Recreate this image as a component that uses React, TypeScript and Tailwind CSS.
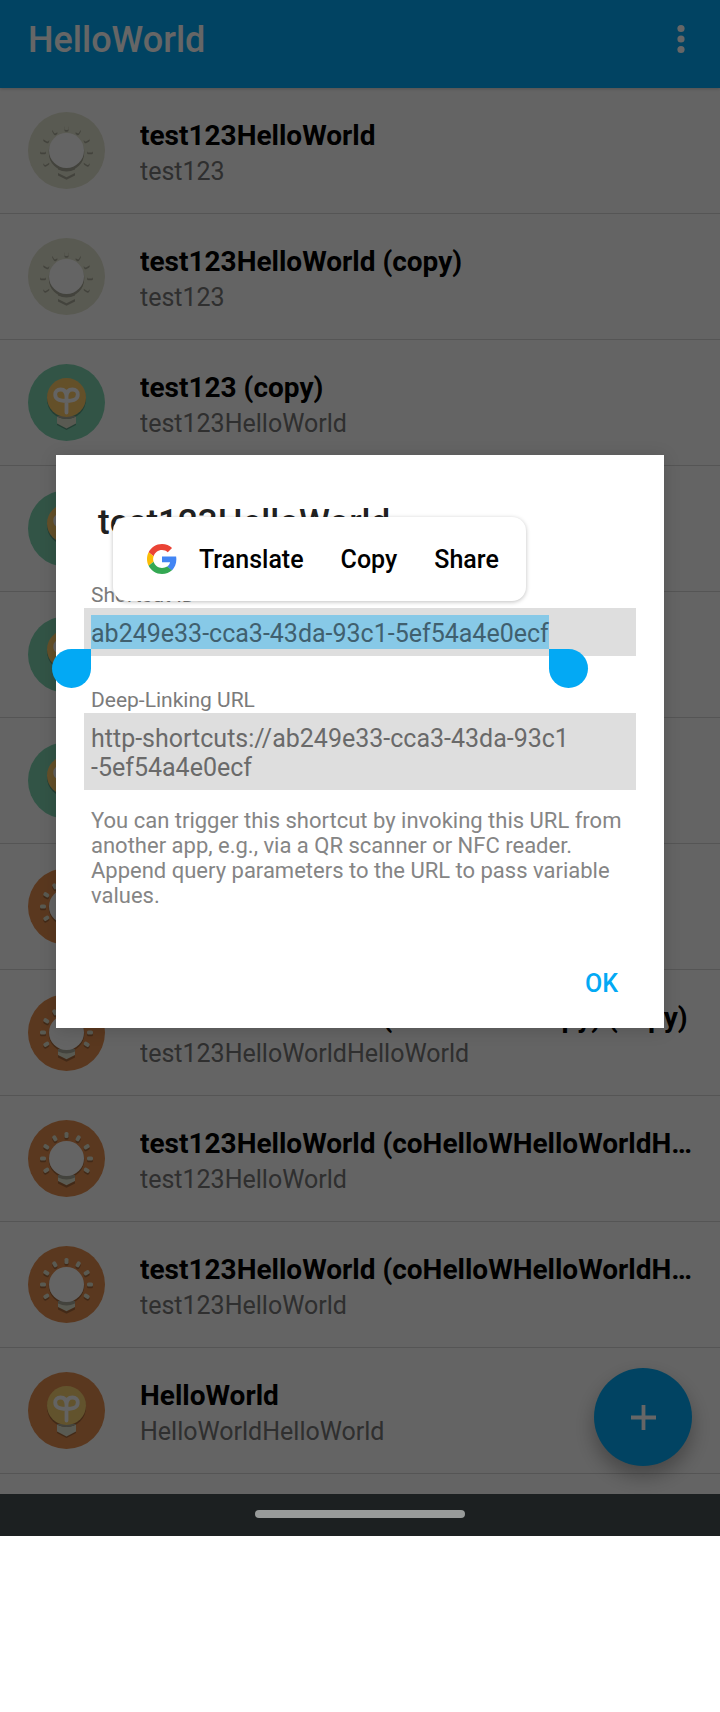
import React from "react";

type Kind = "pale" | "green" | "sun" | "sprout";

type Shortcut = { title: string; description: string; kind: Kind };

const shortcuts: Shortcut[] = [
  { title: "test123HelloWorld", description: "test123", kind: "pale" },
  { title: "test123HelloWorld (copy)", description: "test123", kind: "pale" },
  { title: "test123 (copy)", description: "test123HelloWorld", kind: "green" },
  { title: "test123", description: "test123HelloWorld", kind: "green" },
  { title: "test123", description: "test123HelloWorld", kind: "green" },
  { title: "test123", description: "test123HelloWorld", kind: "green" },
  { title: "test123HelloWorld", description: "test123HelloWorld", kind: "sun" },
  { title: "test123HelloWorld (HelloWorldcopy) (copy)", description: "test123HelloWorldHelloWorld", kind: "sun" },
  { title: "test123HelloWorld (coHelloWHelloWorldHelloWorld)", description: "test123HelloWorld", kind: "sun" },
  { title: "test123HelloWorld (coHelloWHelloWorldHelloWorld)", description: "test123HelloWorld", kind: "sun" },
  { title: "HelloWorld", description: "HelloWorldHelloWorld", kind: "sprout" },
];

const rays: [number, number, number][] = [
  [15, 38.5, 90],
  [18.3, 26.8, -60],
  [26.8, 18.3, -30],
  [38.5, 15, 0],
  [50.2, 18.3, 30],
  [58.7, 26.8, 60],
  [62, 38.5, 90],
  [58.7, 50.2, -60],
  [18.3, 50.2, 60],
];

function Rays({ color, dy }: { color: string; dy: number }) {
  return (
    <g fill={color}>
      {rays.map(([x, y, angle]) => (
        <rect
          key={`${x}-${y}`}
          x={x - 2}
          y={y + dy - 3}
          width="4"
          height="6"
          rx="1.6"
          transform={`rotate(${angle} ${x} ${y + dy})`}
        />
      ))}
    </g>
  );
}

function ShiningBulb({ pale }: { pale: boolean }) {
  const disc = pale ? "#dfe0cc" : "#e18c4e";
  const shade = pale ? "#a8a998" : "#a5683a";
  return (
    <svg viewBox="0 0 77 77" className="size-[77px] shrink-0" aria-hidden="true">
      <circle cx="38.5" cy="38.5" r="38.5" fill={disc} />
      <Rays color={shade} dy={1.8} />
      <Rays color="#dfe0cc" dy={0} />
      <path d="M30 55h17v8.4l-8.5 4.3-8.5-4.3z" fill={shade} />
      <path d="M30 55h17v6l-8.5 4.3-8.5-4.3z" fill="#dfe0cc" />
      <circle cx="38.5" cy="40" r="17.8" fill={shade} />
      <path d="M30 55h17v2.500q-8.500 4-17 0z" fill="#a8a998" />
      {pale && <circle cx="38.5" cy="41.500" r="17.500" fill={shade} />}
      <circle cx="38.5" cy="38.5" r="17.5" fill="#fbfbfb" />
    </svg>
  );
}

function SproutBulb({ green }: { green: boolean }) {
  const disc = green ? "#7dd2b0" : "#e18c4e";
  const shade = green ? "#5a9c82" : "#a5683a";
  const glass = green ? "#fbc768" : "#f5cf70";
  return (
    <svg viewBox="0 0 77 77" className="size-[77px] shrink-0" aria-hidden="true">
      <circle cx="38.5" cy="38.5" r="38.5" fill={disc} />
      <path d="M29 50h19v11l-9.500 5-9.500-5z" fill={shade} />
      <path d="M29 50h19v9.500l-9.500 5-9.500-5z" fill="#dfe0cc" />
      <circle cx="38.5" cy="35.5" r="19.500" fill={shade} />
      <path d="M29 52h19v0.500q-9.500 5-19 0z" fill="#a8a998" />
      <circle cx="38.5" cy="33.5" r="19.500" fill={glass} />
      <path
        d="M38.500 48.500V33c0-5-2-7.500-6-7.500-3.300 0-5.300 2-5.300 5 0 4 4 6.500 11.300 6.500s11.300-2.500 11.300-6.500c0-3-2-5-5.300-5-4 0-6 2.500-6 7.500"
        fill="none"
        stroke="#f7f7f7"
        strokeWidth="3.800"
        strokeLinecap="round"
      />
    </svg>
  );
}

function ShortcutIcon({ kind }: { kind: Kind }) {
  if (kind === "pale" || kind === "sun") return <ShiningBulb pale={kind === "pale"} />;
  return <SproutBulb green={kind === "green"} />;
}

function ShortcutRow({ title, description, kind }: Shortcut) {
  return (
    <li className="flex h-[126px] items-center gap-[35px] border-b border-[#d4d4d4] px-7">
      <ShortcutIcon kind={kind} />
      <div className="flex min-w-0 flex-1 flex-col gap-[5px] pt-1">
        <h2 className="truncate text-[28px] leading-[33px] font-bold text-black">{title}</h2>
        <p className="truncate text-[25px] leading-[29px] text-[#757575]">{description}</p>
      </div>
    </li>
  );
}

function GoogleLogo() {
  return (
    <svg viewBox="0 0 48 48" className="size-[30px]" aria-hidden="true">
      <path fill="#EA4335" d="M24 9.500c3.540 0 6.710 1.220 9.210 3.600l6.850-6.850C35.900 2.380 30.470 0 24 0 14.620 0 6.510 5.380 2.560 13.220l7.980 6.190C12.430 13.720 17.740 9.500 24 9.500z" />
      <path fill="#4285F4" d="M46.980 24.550c0-1.570-.15-3.090-.38-4.550H24v9.020h12.940c-.58 2.960-2.260 5.480-4.780 7.180l7.730 6c4.510-4.180 7.090-10.360 7.090-17.650z" />
      <path fill="#FBBC05" d="M10.530 28.590c-.48-1.450-.76-2.990-.76-4.590s.27-3.140.76-4.590l-7.980-6.190C.92 16.460 0 20.120 0 24c0 3.880.92 7.540 2.560 10.780l7.970-6.190z" />
      <path fill="#34A853" d="M24 48c6.480 0 11.930-2.130 15.890-5.810l-7.730-6c-2.150 1.450-4.920 2.300-8.160 2.300-6.260 0-11.570-4.220-13.470-9.910l-7.980 6.190C6.510 42.620 14.620 48 24 48z" />
    </svg>
  );
}

function SelectionToolbar() {
  return (
    <div
      role="toolbar"
      aria-label="Text selection"
      className="absolute bottom-full left-[29px] z-10 mb-[7px] flex h-[84px] items-center gap-[37px] rounded-[14px] bg-white pr-[27px] pl-[34px] text-[25px] leading-[29px] font-medium text-black shadow-[0_1px_4px_rgba(0,0,0,0.25)]"
    >
      <button type="button" className="flex items-center gap-[22px]">
        <GoogleLogo />
        Translate
      </button>
      <button type="button">Copy</button>
      <button type="button">Share</button>
    </div>
  );
}

function ShortcutDialog() {
  return (
    <section
      role="dialog"
      aria-labelledby="dialog-title"
      className="w-full bg-white px-7 pt-[47px] pb-[13px] shadow-[0_2px_16px_rgba(0,0,0,0.15)]"
    >
      <h2 id="dialog-title" className="px-[14px] text-[35px] leading-[41px] font-medium text-[#212121]">
        test123HelloWorld
      </h2>
      <dl className="mt-[39px]">
        <dt className="px-[7px] text-[21px] leading-[26px] text-[#7b7b7b]">Shortcut ID</dt>
        <dd className="relative flex bg-[#dedede] p-[7px] text-[25px] leading-[29px] text-[#40606f]">
          <span className="relative bg-[#87c9e7] pt-1 pb-px">
            ab249e33-cca3-43da-93c1-5ef54a4e0ecf
            <span className="absolute top-full right-full size-[39px] rounded-full rounded-tr-none bg-[#03a9f4]" />
            <span className="absolute top-full left-full size-[39px] rounded-full rounded-tl-none bg-[#03a9f4]" />
          </span>
          <SelectionToolbar />
        </dd>
        <dt className="mt-[31px] px-[7px] text-[21px] leading-[26px] text-[#7b7b7b]">Deep-Linking URL</dt>
        <dd className="bg-[#dedede] px-[7px] pt-[11px] pb-2 text-[25px] leading-[29px] text-[#6a6a6a]">
          <span className="whitespace-nowrap">http-shortcuts://ab249e33-cca3-43da-93c1</span>
          <wbr />
          <span className="whitespace-nowrap">-5ef54a4e0ecf</span>
        </dd>
      </dl>
      <p className="mt-[18px] px-[7px] text-[22px] leading-[25px] text-[#858585]">
        You can trigger this shortcut by invoking this URL from another app, e.g., via a QR scanner or NFC reader. Append
        query parameters to the URL to pass variable values.
      </p>
      <div className="mt-11 flex justify-end">
        <button type="button" className="h-[63px] px-[18px] text-[25px] leading-[29px] font-medium text-[#03a9f4]">
          OK
        </button>
      </div>
    </section>
  );
}

export default function App() {
  return (
    <div className="min-h-screen bg-white font-['Roboto',sans-serif]">
      <main className="relative overflow-hidden bg-[#fafafa]">
        <header className="relative flex h-[88px] items-start justify-between bg-[#03a9f4] px-7 pt-5 text-white shadow-[0_1px_3px_rgba(0,0,0,0.2)]">
          <h1 className="text-[36px] leading-[41px] font-medium">HelloWorld</h1>
          <button type="button" aria-label="More options" className="flex h-[38px] w-[22px] items-center justify-center">
            <svg viewBox="0 0 8 30" className="h-[30px] w-2" fill="currentColor" aria-hidden="true">
              <circle cx="4" cy="4.5" r="3.600" />
              <circle cx="4" cy="15" r="3.600" />
              <circle cx="4" cy="25.5" r="3.600" />
            </svg>
          </button>
        </header>
        <ul className="pb-5">
          {shortcuts.map((shortcut, index) => (
            <ShortcutRow key={index} {...shortcut} />
          ))}
        </ul>
        <button
          type="button"
          aria-label="Create shortcut"
          className="absolute right-7 bottom-7 flex size-[98px] items-center justify-center rounded-full bg-[#03a9f4] text-white shadow-[0_10px_20px_rgba(0,0,0,0.3)]"
        >
          <svg viewBox="0 0 25 25" className="size-[25px]" fill="currentColor" aria-hidden="true">
            <path d="M10.600 0h3.800v10.600H25v3.800H14.400V25h-3.800V14.400H0v-3.800h10.600z" />
          </svg>
        </button>
        <div className="absolute inset-0 flex items-center bg-black/60 px-14 pb-[11px]">
          <ShortcutDialog />
        </div>
      </main>
      <nav aria-label="System" className="flex h-[42px] items-center justify-center bg-[#1c2021] pb-0.5">
        <span className="h-2 w-[210px] rounded-full bg-[#989b9a]" />
      </nav>
    </div>
  );
}
